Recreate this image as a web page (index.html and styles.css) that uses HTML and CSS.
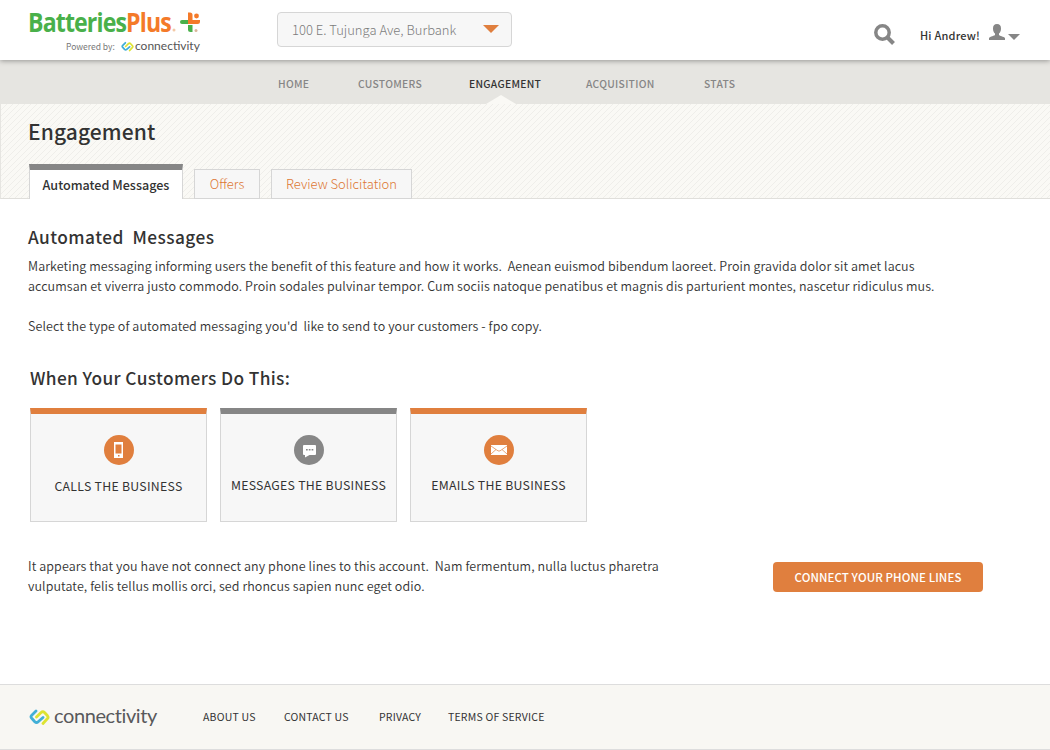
FILE: index.html
```html
<!DOCTYPE html>
<html lang="en">
<head>
<meta charset="utf-8">
<title>Engagement</title>
<link rel="stylesheet" href="styles.css">
</head>
<body>
<header class="topbar">
  <div class="brand">
    <div class="brand-row">
      <span class="brand-name"><span class="green">Batteries</span><span class="orange">Plus</span></span>
      <svg class="brand-mark" width="32" height="22" viewBox="0 0 32 22">
        <circle cx="3" cy="20" r="1.500" fill="#f3c9a6"/>
        <path d="M11 10h7v4h-7q-2 0-2-2t2-2z" fill="#49b04a"/>
        <path d="M17 2.500h2q2.500 0 2.500 2.500v5h7.500v1.500q0 2.500-2.500 2.500H17z" fill="#f47a29"/>
        <circle cx="25.500" cy="6" r="2.400" fill="#f47a29"/>
        <path d="M17 15h4.500v7h-2q-2.500 0-2.500-2.500z" fill="#49b04a"/>
        <circle cx="25" cy="20.500" r="1.500" fill="#d9b69a"/>
      </svg>
    </div>
    <div class="powered">
      <span class="powered-label">Powered by:</span>
      <svg class="link-small" width="13" height="11" viewBox="0 0 21 16"><use href="#links"/></svg>
      <span class="conn-small">connectivity</span>
    </div>
  </div>
  <div class="location"><span>100 E. Tujunga Ave, Burbank</span><i class="caret-orange"></i></div>
  <div class="account">
    <svg class="search" width="22" height="22" viewBox="0 0 22 22"><circle cx="8.500" cy="8.500" r="6.700" fill="none" stroke="#868686" stroke-width="3.500"/><path d="M13.500 13.500l6 6" stroke="#868686" stroke-width="4"/></svg>
    <span class="greeting">Hi Andrew!</span>
    <svg class="user" width="16" height="17" viewBox="0 0 16 17"><path d="M8 0c2.800 0 4 1.700 4 4.500 0 2.300-.8 4.200-2 5v1.600c0 .6 5.100 1.800 6 3V16H0V14c.9-1.200 6-2.300 6-2.900V9.500c-1.200-.8-2-2.700-2-5C4 1.700 5.200 0 8 0z" fill="#868686"/></svg>
    <i class="caret-gray"></i>
  </div>
</header>
<nav class="nav">
  <a class="n1">HOME</a><a class="n2">CUSTOMERS</a><a class="n3 active">ENGAGEMENT</a><a class="n4">ACQUISITION</a><a class="n5">STATS</a>
</nav>
<section class="banner">
  <h1>Engagement</h1>
  <div class="tabs">
    <a class="tab current"><span>Automated Messages</span></a>
    <a class="tab offers"><span>Offers</span></a>
    <a class="tab review"><span>Review Solicitation</span></a>
  </div>
</section>
<main class="content">
  <h2 class="h-auto">Automated&nbsp; Messages</h2>
  <p class="copy">Marketing messaging informing users the benefit of this feature and how it works.&nbsp; Aenean euismod bibendum laoreet. Proin gravida dolor sit amet lacus<br>accumsan et viverra justo commodo. Proin sodales pulvinar tempor. Cum sociis natoque penatibus et magnis dis parturient montes, nascetur ridiculus mus.<br><br>Select the type of automated messaging you'd&nbsp; like to send to your customers - fpo copy.</p>
  <h2 class="h-when">When Your Customers Do This:</h2>
  <div class="cards">
    <div class="card calls">
      <svg width="30" height="30" viewBox="0 0 30 30"><circle cx="15" cy="15" r="15" fill="#e07f3e"/><path fill-rule="evenodd" d="M10 7h9v16h-9zM11.500 9.500v9h6v-9zM14 20v1.500h1.500V20z" fill="#fff"/></svg>
      <span>CALLS THE BUSINESS</span>
    </div>
    <div class="card gray messages">
      <svg width="30" height="30" viewBox="0 0 30 30"><circle cx="15" cy="15" r="15" fill="#878787"/><path d="M10 10h11q1 0 1 1v8q0 1-1 1h-5.500L11 22.500V20h-1q-1 0-1-1v-8q0-1 1-1z" fill="#fff"/><path d="M12 14h1.700v1.500H12zM14.800 14h1.700v1.500h-1.700zM17.600 14h1.700v1.500h-1.700z" fill="#878787"/></svg>
      <span>MESSAGES THE BUSINESS</span>
    </div>
    <div class="card emails">
      <svg width="30" height="30" viewBox="0 0 30 30"><circle cx="15" cy="15" r="15" fill="#e07f3e"/><path d="M7 10h16v10H7z" fill="#fff"/><path d="M7 11l5 3.500 2 1.300q1 .6 2 0l2-1.300 5-3.500M7 19l5-4.500M23 19l-5-4.500" fill="none" stroke="#e07f3e" stroke-width=".7"/></svg>
      <span>EMAILS THE BUSINESS</span>
    </div>
  </div>
  <div class="notice">
    <p class="copy">It appears that you have not connect any phone lines to this account.&nbsp; Nam fermentum, nulla luctus pharetra<br>vulputate, felis tellus mollis orci, sed rhoncus sapien nunc eget odio.</p>
    <a class="button"><span>CONNECT YOUR PHONE LINES</span></a>
  </div>
</main>
<footer class="footer">
  <svg class="link-big" width="21" height="17" viewBox="0 0 21 17">
    <g id="links" fill="none" stroke-width="2.800" stroke-linejoin="round" stroke-linecap="round">
      <path d="M7 2L2.500 6.500Q1.500 7.800 2.500 9l3.300 3.700q1.700 1.700 3.400 0L14 8.500" stroke="#42afd6"/>
      <path d="M7.500 8l4.600-4.500q1.700-1.500 3.400 0l3 3.300q1.200 1.400 0 2.700L14 14.500" stroke="#dde332"/>
    </g>
  </svg>
  <span class="conn-big">connectivity</span>
  <nav class="foot-links"><a class="f1">ABOUT US</a><a class="f2">CONTACT US</a><a class="f3">PRIVACY</a><a class="f4">TERMS OF SERVICE</a></nav>
</footer>
</body>
</html>
```
FILE: styles.css
```css
* { box-sizing: border-box; }
body { margin: 0; width: 1050px; height: 750px; overflow: hidden; background: #fff; color: #333; font-family: "Noto Sans CJK SC", "Noto Sans", sans-serif; display: flex; flex-direction: column; }
h1, h2, p { margin: 0; font-weight: 500; }
span, a, h1, h2, p { white-space: nowrap; }
svg { display: block; flex: none; }

.topbar { height: 60px; flex: none; display: flex; position: relative; background: #fff; box-shadow: 0 1px 5px rgba(0,0,0,.35); z-index: 1; }
.brand { width: 277px; padding: 9px 0 0 28px; }
.brand-row { display: flex; height: 25px; }
.brand-name { font: bold 27px/25px "Open Sans", sans-serif; letter-spacing: -1px; width: 142px; transform: scaleX(.855); transform-origin: 0 0; }
.brand-mark { margin: 1px 0 0 1px; }
.green { color: #49b04a; }
.orange { color: #f47a29; }
.powered { display: flex; height: 22px; margin-top: 1px; padding-left: 38px; align-items: center; color: #777; }
.powered-label { font-size: 8.500px; width: 55px; }
.conn-small { font: 12px/14px Lato, sans-serif; color: #555; margin-left: 1px; }
.location { width: 235px; height: 35px; margin-top: 12px; padding: 0 12px 0 14px; border: 1px solid #d6d6d6; border-radius: 4px; background: #f7f7f7; color: #7c7c7c; font-size: 13px; font-weight: 300; display: flex; align-items: center; justify-content: space-between; }
.location span { margin-top: -1px; }
.caret-orange { border: 8px solid transparent; border-top-color: #e07f3e; border-bottom: 0; margin-top: -1px; }
.account { display: flex; margin-left: 362px; padding-top: 24px; }
.greeting { font-size: 11px; font-weight: 500; line-height: 22px; width: 60px; margin-left: 24px; letter-spacing: .2px; }
.user { margin-left: 9px; }
.caret-gray { height: 0; margin: 10px 0 0 3px; border: 6px solid transparent; border-top-color: #868686; border-bottom: 0; }

.nav { height: 44px; flex: none; background: #e6e5e1; display: flex; padding: 14px 0 0 278px; font-size: 10.300px; font-weight: 500; line-height: 20px; letter-spacing: .3px; color: #868686; }
.n1 { width: 80px; } .n2 { width: 111px; } .n3 { width: 117px; } .n4 { width: 118px; }
.active { color: #333; position: relative; }
.active::after { content: ""; position: absolute; left: 17px; top: 21px; border: 15px solid transparent; border-bottom: 9px solid #faf9f5; border-top: 0; }

.banner { height: 95px; flex: none; padding: 13px 0 0 28px; border-left: 1px solid #e6e5e1; border-bottom: 1px solid #e0dfdb; background: linear-gradient(135deg, transparent 42%, #efeeea 42% 58%, transparent 58%) 0 0 / 6px 6px #faf9f5; }
h1 { font-size: 21px; line-height: 28px; height: 47px; letter-spacing: .1px; margin-left: -1px; }
.tabs { display: flex; align-items: flex-end; height: 35px; font-size: 13px; line-height: 20px; }
.tab { border: 1px solid #d6d6d6; background: #f7f7f7; color: #dd7632; height: 30px; text-align: center; padding-top: 4px; font-weight: 300; }
.current { width: 154px; height: 35px; margin-right: 11px; padding-top: 5px; border-top: 6px solid #868686; border-bottom: 0; background: #fff; color: #333; font-size: 12.600px; font-weight: 500; }
.offers { width: 66px; margin-right: 11px; }
.review { width: 141px; }

.content { flex: 1; padding: 26px 0 0 28px; }
h2 { font-size: 17.300px; line-height: 24px; letter-spacing: .37px; }
.copy { font-size: 12.500px; font-weight: 350; line-height: 20px; letter-spacing: .09px; }
.h-auto { height: 31px; letter-spacing: .45px; }
.h-when { margin: 30px 0 0 2px; height: 42px; }
.cards { display: flex; gap: 13px; padding-left: 2px; }
.card { width: 177px; height: 114px; border: 1px solid #d6d6d6; border-top: 6px solid #e07f3e; background: #f7f7f7; display: flex; flex-direction: column; align-items: center; padding-top: 21px; gap: 9px; font-size: 12.300px; line-height: 22px; letter-spacing: .27px; }
.calls { gap: 10px; }
.gray { border-top-color: #868686; }
.notice { display: flex; margin-top: 34px; }
.notice .copy { width: 745px; }
.button { width: 210px; height: 30px; margin-top: 6px; border-radius: 4px; background: #e07f3e; color: #fff; font-size: 11.500px; font-weight: 500; line-height: 30px; letter-spacing: .1px; text-align: center; }

.footer { height: 66px; flex: none; border-top: 1px solid #ddd; border-bottom: 1px solid #ddd; background: #f8f7f3; display: flex; padding-left: 29px; }
.link-big { margin-top: 24px; }
.conn-big { font: 20px/24px Lato, sans-serif; letter-spacing: -.4px; color: #58595b; margin: 18px 0 0 4px; width: 149px; }
.foot-links { display: flex; padding-top: 22px; font-size: 10.500px; line-height: 20px; letter-spacing: .2px; }
.f1 { width: 81px; } .f2 { width: 95px; } .f3 { width: 69px; }
```
